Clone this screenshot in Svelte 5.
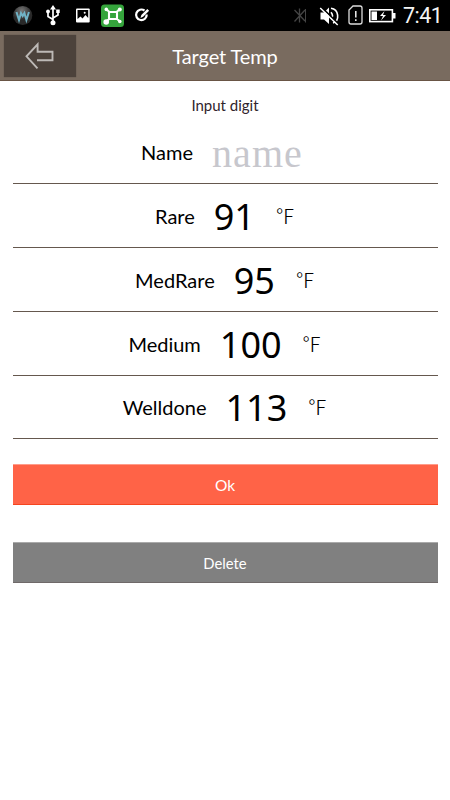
<script lang="ts">
  interface Target {
    id: string;
    label: string;
    value: number;
  }

  const targets: Target[] = [
    { id: 'rare', label: 'Rare', value: 91 },
    { id: 'medrare', label: 'MedRare', value: 95 },
    { id: 'medium', label: 'Medium', value: 100 },
    { id: 'welldone', label: 'Welldone', value: 113 },
  ];
</script>

<div class="screen">
  <div class="status-bar">
    <svg class="status-icons" width="160" height="31" viewBox="0 0 160 31">
      <defs>
        <radialGradient id="orb" cx="45%" cy="25%">
          <stop offset="0" stop-color="#777" />
          <stop offset="1" stop-color="#292929" />
        </radialGradient>
      </defs>
      <circle cx="22.7" cy="15.5" r="9.6" fill="url(#orb)" />
      <path d="M16.5 12l2.5 8 2-7 1.7 3 1.7-3 2 7 2.5-8" fill="none" stroke="#70b3c6" stroke-width="2" />
      <g stroke="#fff" fill="none" stroke-width="1.7">
        <path d="M53 22V8M53 19.5l-5-3v-4M53 18l5-3v-4" />
      </g>
      <path d="M53 5l-3 4.5h6zM56.2 9.5h3.5V13h-3.5z" fill="#fff" />
      <circle cx="48" cy="11.5" r="1.9" fill="#fff" />
      <circle cx="53" cy="22.7" r="2.5" fill="#fff" />
      <rect x="76" y="8.5" width="13.7" height="14" rx="1" fill="#fff" />
      <path d="M77.5 10h10.7v8l-2.7-3-3 3.5-2-2-3 2.5z" fill="#000" />
      <circle cx="84.7" cy="12.7" r="1" fill="#fff" />
      <rect x="101" y="4.5" width="23" height="22.5" rx="3.5" fill="#35a43c" />
      <path d="M106.5 9.5l3 2.5h7l3-2.5M109 12v7h8v-7M109 19l-3 3M117 19l3 2.5" fill="none" stroke="#fff" stroke-width="2.1" />
      <circle cx="106.3" cy="9.4" r="1.8" fill="#fff" />
      <circle cx="119.8" cy="9.4" r="2" fill="#fff" />
      <circle cx="106.2" cy="22" r="2.8" fill="#fff" />
      <circle cx="119.8" cy="21.5" r="1.8" fill="#fff" />
      <path d="M144.5 10.5a5.3 5.3 0 1 0 2.2 4" fill="none" stroke="#fff" stroke-width="2.2" />
      <path d="M140.5 18l.8-3 6-6 1.8 1.8-6 6z" fill="#fff" />
    </svg>
    <svg class="status-icons" width="116" height="31" viewBox="285 0 116 31">
      <path d="M294.5 10l10.5 11M294.5 21.5L305 10M299.5 8.5v14" fill="none" stroke="#444" stroke-width="1.3" />
      <path d="M305.5 9v13.5" stroke="#444" />
      <path d="M320.5 12.5h3.5l5-5v16.5l-5-4.5h-3.5z" fill="#fff" />
      <path d="M331 12.2q3 3.3 0 7M331 8.2c8 1 9 12.5 2 14.8" fill="none" stroke="#fff" stroke-width="1.6" />
      <path d="M321 6.8l18 17.5" stroke="#000" stroke-width="1.8" />
      <path d="M320.2 8l17.5 17" stroke="#fff" stroke-width="1.5" />
      <path d="M353 6h7q2 0 2 2v14q0 2-2 2h-9q-2 0-2-2V10z" fill="none" stroke="#ddd" stroke-width="1.3" />
      <path d="M355.8 11v6.5M355.8 19.3v1.7" stroke="#eee" stroke-width="1.5" />
      <rect x="369.8" y="9.8" width="22.6" height="11.8" fill="none" stroke="#fff" stroke-width="1.6" />
      <path d="M371.5 11.5h5.5v8.5h-5.5zM393 13h2.5v5.5H393z" fill="#fff" />
      <path d="M384.5 11l-4.5 5h3l-2 4.5 5-5.5h-3z" fill="#fff" />
    </svg>
    <span class="clock">7:41</span>
  </div>

  <header class="title-bar">
    <button class="back" aria-label="Back">
      <svg width="30" height="28" viewBox="0 0 30 28">
        <path d="M12.5 26.3L1.5 14.3 12.6 2.3v7.4h14.9v8.6H12" fill="none" stroke="#bdb9b6" stroke-width="1.9" />
      </svg>
    </button>
    <h1>Target Temp</h1>
    <div></div>
  </header>

  <main>
    <p class="hint">Input digit</p>

    <div class="row name">
      <span class="label">Name</span>
      <span class="placeholder">name</span>
    </div>
    {#each targets as target (target.id)}
      <div class="row {target.id}">
        <span class="label">{target.label}</span>
        <span class="value">{target.value}</span>
        <span class="unit">℉</span>
      </div>
    {/each}

    <button class="action ok">Ok</button>
    <button class="action delete">Delete</button>
  </main>
</div>

<style>
  :global(body) {
    background: #fff;
  }

  .screen {
    width: 450px;
    height: 800px;
    overflow: hidden;
    font-family: Lato, 'Open Sans', sans-serif;
    color: #000;
    background: #fff;
  }

  .status-bar {
    display: flex;
    align-items: center;
    height: 31px;
    padding-right: 7px;
    background: #000;
  }

  .status-icons {
    flex: none;
  }

  .status-icons:first-child {
    margin-right: auto;
  }

  .clock {
    width: 40px;
    margin-left: 2px;
    font-family: Roboto, sans-serif;
    font-size: 21.5px;
    line-height: 31px;
    letter-spacing: -0.5px;
    white-space: nowrap;
    color: #f4f4f4;
  }

  .title-bar {
    display: grid;
    grid-template-columns: 72px 1fr 72px;
    align-items: center;
    box-sizing: border-box;
    height: 50px;
    padding: 0 4px;
    background: #796b5f;
    border-bottom: 1px solid #695545;
  }

  button {
    padding: 0;
    border: 0;
    font-family: inherit;
  }

  .back {
    display: flex;
    align-items: center;
    height: 42px;
    padding-left: 21px;
    background: #4c423b;
    box-shadow: 0 0 1px #4c423b;
  }

  h1 {
    margin: 0;
    font-size: 20px;
    font-weight: 400;
    line-height: 24px;
    letter-spacing: -0.1px;
    text-align: center;
    color: #fff;
  }

  main {
    padding: 0 12.5px;
  }

  .hint {
    height: 39px;
    margin: 0;
    padding-top: 14px;
    box-sizing: border-box;
    font-size: 15px;
    line-height: 20px;
    text-align: center;
    color: #30242c;
  }

  .row {
    display: flex;
    align-items: center;
    justify-content: center;
    box-sizing: border-box;
    height: 64px;
    border-bottom: 1px solid #65584e;
    line-height: 60px;
  }

  .row.name {
    padding-right: 6px;
  }

  .row.welldone {
    height: 63px;
  }

  .label {
    margin-right: 19px;
    font-size: 20px;
  }

  .placeholder {
    padding-top: 4px;
    font-family: 'Liberation Serif', serif;
    font-size: 40px;
    letter-spacing: 1.1px;
    color: #c7c7cd;
  }

  .value {
    padding-top: 2px;
    font-family: 'Noto Sans', sans-serif;
    font-size: 36px;
  }

  .unit {
    margin-left: 20px;
    font-family: 'Noto Sans CJK JP', sans-serif;
    font-weight: 300;
    font-size: 20px;
  }

  .action {
    display: block;
    box-sizing: border-box;
    width: 100%;
    height: 41px;
    padding-top: 1px;
    font-size: 15.5px;
    line-height: 38px;
    text-align: center;
    color: #fff;
  }

  .ok {
    margin-top: 25px;
    background: #ff6347;
    border-top: 1px solid #ff9c8a;
    border-bottom: 1px solid #f5451f;
  }

  .delete {
    margin-top: 37px;
    font-size: 14.8px;
    background: #808080;
    border-top: 1px solid #aaa;
    border-bottom: 1px solid #6f6969;
  }
</style>
